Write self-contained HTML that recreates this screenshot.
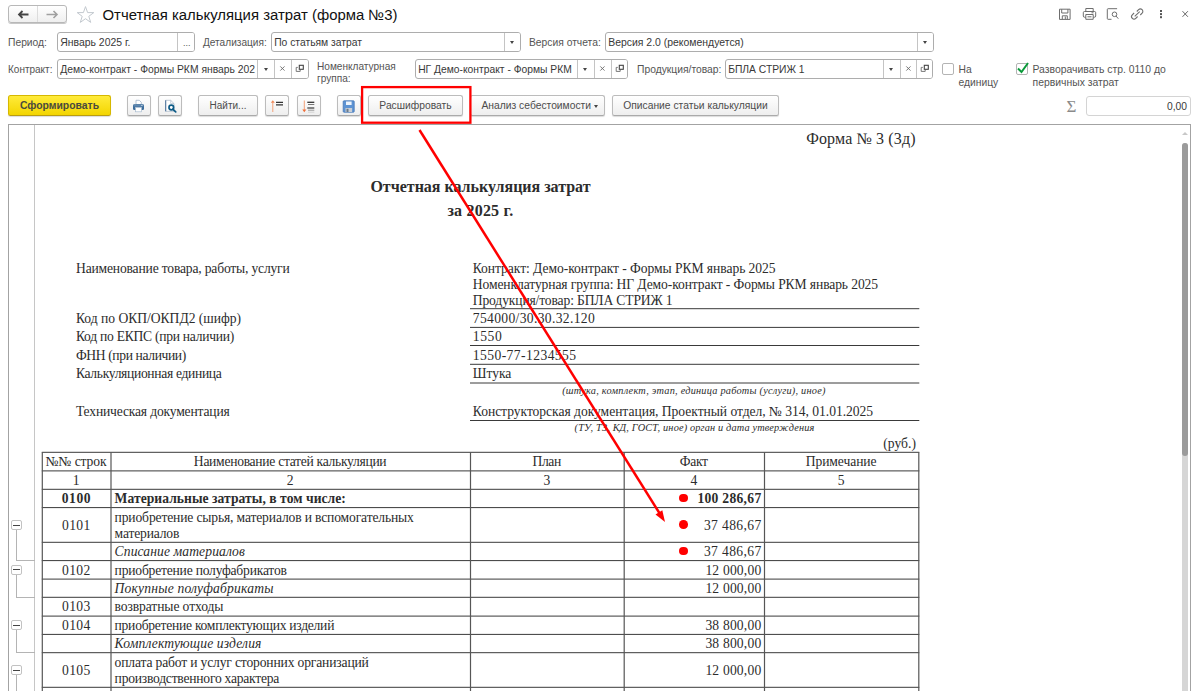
<!DOCTYPE html>
<html lang="ru"><head><meta charset="utf-8"><title>Отчетная калькуляция затрат (форма №3)</title>
<style>
html,body{margin:0;padding:0;background:#fff;}
body{width:1200px;height:691px;overflow:hidden;position:relative;font-family:"Liberation Sans",sans-serif;font-size:10.3px;color:#333;}
.abs{position:absolute;}
.lbl{position:absolute;color:#545454;font-size:10.3px;line-height:13px;white-space:nowrap;}
.inp{position:absolute;box-sizing:border-box;border:1px solid #adadad;border-radius:3px;background:#fff;height:20px;font-size:10.3px;line-height:20.2px;color:#383838;padding-left:2.2px;white-space:nowrap;overflow:hidden;}
.seg{position:absolute;top:0;bottom:0;border-left:1px solid #c4c4c4;box-sizing:border-box;background:#fff;}
.btn{position:absolute;box-sizing:border-box;border:1px solid #bcbcbc;border-bottom-color:#aaa;border-radius:2.500px;height:20.600px;background:linear-gradient(#ffffff,#eeeeee);box-shadow:0 1px 1px rgba(0,0,0,.14);font-size:10.3px;line-height:20.4px;text-align:center;color:#4c4c4c;white-space:nowrap;}
.doc{position:absolute;left:8px;top:124px;width:1183px;height:580px;box-sizing:border-box;border:1px solid #a3a3a3;background:#fff;}
.t{position:absolute;white-space:nowrap;font-family:"Liberation Serif",serif;font-size:13.6px;line-height:15px;color:#2c2c2c;}
.hl{position:absolute;height:1px;background:#3c3c3c;}
.vl{position:absolute;width:1px;background:#555;}
.gl{position:absolute;background:#b4b4b4;}
.dot{position:absolute;width:8.6px;height:8.6px;border-radius:50%;background:#f00;}
.dd{position:absolute;left:50%;top:8px;margin-left:-2.7px;width:0;height:0;border-left:2.7px solid transparent;border-right:2.7px solid transparent;border-top:3.2px solid #444;}
</style></head><body>

<!-- title row -->
<div class="abs" style="left:8px;top:5px;width:59px;height:18px;box-sizing:border-box;border:1px solid #b8b8b8;border-radius:3px;background:linear-gradient(#fff,#efefef);box-shadow:0 1px 0 #c8c8c8;"></div>
<div class="abs" style="left:37px;top:6px;width:1px;height:16px;background:#dcdcdc;"></div>
<svg class="abs" style="left:8px;top:5px" width="59" height="18" viewBox="0 0 59 18">
<path d="M20.500 9.500H11.500M14.500 6L11 9.500L14.500 13" fill="none" stroke="#444" stroke-width="1.8"/>
<path d="M38.500 9.500H48.500M45.500 6L49 9.500L45.500 13" fill="none" stroke="#a0a0a0" stroke-width="1.6"/>
</svg>
<svg class="abs" style="left:76px;top:5px" width="20" height="20" viewBox="0 0 20 20"><path d="M9.500 1.600L11.600 7.600H17.800L12.800 11.300L14.700 17.400L9.500 13.700L4.300 17.400L6.200 11.300L1.200 7.600H7.400Z" fill="#fff" stroke="#c3c9cf" stroke-width="1"/></svg>
<div class="abs" style="left:102.500px;top:4px;font-size:14.900px;line-height:22px;color:#111;white-space:nowrap;">Отчетная калькуляция затрат (форма №3)</div>

<!-- top-right icons -->
<svg class="abs" style="left:1050px;top:0" width="150" height="30" viewBox="0 0 150 30" fill="none" stroke="#6e6e6e" stroke-width="1">
<path d="M9.500 9.200h10.600v10.200h-10.600zM11.700 9.200v3.800h6.200v-3.800M12.300 19.400v-3.600h5v3.600M15.300 16.500v2.500"/>
<path d="M35.800 11.500v-3h7.400v3M35.800 17.200h-1.300a1.200 1.200 0 0 1 -1.200 -1.200v-3.300a1.200 1.200 0 0 1 1.200 -1.200h10a1.200 1.200 0 0 1 1.200 1.200v3.300a1.200 1.200 0 0 1 -1.200 1.200h-1.300M35.800 14.500h7.400v4.800h-7.400zM37.500 16.800h4M41.500 12.800h2"/>
<path d="M61.500 19.300h-3.400a.8 .8 0 0 1 -.8 -.8v-9a.8 .8 0 0 1 .8 -.8h9M66 16l2.300 2.700"/><circle cx="64.500" cy="14.300" r="2.300"/>
<path d="M84.700 16.300l5 -4.600M86.800 11.500l1.800 -1.800a2.450 2.450 0 0 1 3.500 3.500l-1.800 1.800M87.600 16.500l-1.800 1.800a2.450 2.450 0 0 1 -3.500 -3.500l1.800 -1.800" stroke-width="1.100"/>
<path d="M132.500 11.200l5.400 5.600M137.900 11.200l-5.400 5.600" stroke="#666"/>
</svg>
<div class="abs" style="left:1160.300px;top:9.800px;width:1.900px;height:1.900px;background:#555;box-shadow:0 3.100px 0 #555,0 6.200px 0 #555;"></div>

<!-- row 2 -->
<div class="lbl" style="left:8px;top:35.800px;">Период:</div>
<div class="inp" style="left:57px;top:32px;width:138px;font-size:10.45px">Январь 2025 г.<div class="seg" style="left:119.300px;width:17.700px;text-align:center;color:#555;font-size:9px;">...</div></div>
<div class="lbl" style="left:203px;top:35.800px;font-size:10.100px">Детализация:</div>
<div class="inp" style="left:271px;top:32px;width:250px;">По статьям затрат<div class="seg" style="left:232px;width:17px;"><div class="dd"></div></div></div>
<div class="lbl" style="left:529px;top:35.800px;">Версия отчета:</div>
<div class="inp" style="left:605px;top:32px;width:329px;font-size:10.45px">Версия 2.0 (рекомендуется)<div class="seg" style="left:310.600px;width:17px;"><div class="dd"></div></div></div>

<!-- row 3 -->
<div class="lbl" style="left:8px;top:62.900px;font-size:10px">Контракт:</div>
<div class="inp" style="left:57px;top:59px;width:252px;font-size:10.350px">Демо-контракт - Формы РКМ январь 202<div class="seg" style="left:199.300px;width:17.300px;"><div class="dd"></div></div><div class="seg" style="left:215.900px;width:17px;"><svg class="abs" style="left:0;top:0" width="17" height="18" viewBox="0 0 17 18"><path d="M5.300 6.400l4.200 4.200M9.500 6.400l-4.200 4.200" fill="none" stroke="#6a6a6a" stroke-width="0.9"/></svg></div><div class="seg" style="left:232.800px;width:17.500px;"><svg class="abs" style="left:0;top:0" width="17" height="18" viewBox="0 0 17 18"><path d="M5.800 7.400h-1.600v4h4v-1.500" fill="none" stroke="#777" stroke-width="1"/><rect x="7.300" y="5.300" width="4" height="4" fill="#fff" stroke="#444" stroke-width="1.100"/></svg></div></div>
<div class="lbl" style="left:317px;top:61.400px;line-height:11.800px;font-size:10.100px">Номенклатурная<br>группа:</div>
<div class="inp" style="left:415px;top:59px;width:213px;">НГ Демо-контракт - Формы РКМ<div class="seg" style="left:160.800px;width:17.200px;"><div class="dd"></div></div><div class="seg" style="left:178px;width:17px;"><svg class="abs" style="left:0;top:0" width="17" height="18" viewBox="0 0 17 18"><path d="M5.300 6.400l4.200 4.200M9.500 6.400l-4.200 4.200" fill="none" stroke="#6a6a6a" stroke-width="0.9"/></svg></div><div class="seg" style="left:195.200px;width:17px;"><svg class="abs" style="left:0;top:0" width="17" height="18" viewBox="0 0 17 18"><path d="M5.800 7.400h-1.600v4h4v-1.500" fill="none" stroke="#777" stroke-width="1"/><rect x="7.300" y="5.300" width="4" height="4" fill="#fff" stroke="#444" stroke-width="1.100"/></svg></div></div>
<div class="lbl" style="left:637px;top:62.800px;">Продукция/товар:</div>
<div class="inp" style="left:725px;top:59px;width:208px;">БПЛА СТРИЖ 1<div class="seg" style="left:156.500px;width:17px;"><div class="dd"></div></div><div class="seg" style="left:173.500px;width:17px;"><svg class="abs" style="left:0;top:0" width="17" height="18" viewBox="0 0 17 18"><path d="M5.300 6.400l4.200 4.200M9.500 6.400l-4.200 4.200" fill="none" stroke="#6a6a6a" stroke-width="0.9"/></svg></div><div class="seg" style="left:190.200px;width:17px;"><svg class="abs" style="left:0;top:0" width="17" height="18" viewBox="0 0 17 18"><path d="M5.800 7.400h-1.600v4h4v-1.500" fill="none" stroke="#777" stroke-width="1"/><rect x="7.300" y="5.300" width="4" height="4" fill="#fff" stroke="#444" stroke-width="1.100"/></svg></div></div>
<div class="abs" style="left:942px;top:63px;width:12px;height:12px;box-sizing:border-box;border:1px solid #b4b4b4;border-radius:2px;background:#fff;"></div>
<div class="lbl" style="left:958.500px;top:64.400px;line-height:12.500px;">На<br>единицу</div>
<div class="abs" style="left:1015.6px;top:63px;width:12px;height:12px;box-sizing:border-box;border:1px solid #b4b4b4;border-radius:2px;background:#fff;"></div>
<svg class="abs" style="left:1015px;top:60px" width="16" height="16" viewBox="0 0 16 16"><path d="M3 8.500L6.500 12L13 3" fill="none" stroke="#0a9a3a" stroke-width="2"/></svg>
<div class="lbl" style="left:1032.500px;top:62.500px;line-height:13px;font-size:10.400px">Разворачивать стр. 0110 до<br>первичных затрат</div>

<!-- button row -->
<div class="btn" style="left:8px;top:95px;width:103px;background:linear-gradient(#ffeb3a,#f3d500);border-color:#d6b800;border-bottom-color:#b99d10;color:#4a4a3e;font-weight:bold;font-size:10.400px;">Сформировать</div>
<div class="btn" style="left:127px;top:95px;width:24px;"><svg class="abs" style="left:0;top:0" width="22" height="19" viewBox="0 0 22 19">
<path d="M8 8.500V4.300h3.300l2 2v2.200z" fill="#fff" stroke="#9fb3c8" stroke-width="0.800"/>
<rect x="5" y="8.300" width="11" height="5.600" rx="1.200" fill="#3d6d9c"/>
<rect x="5.600" y="9.300" width="9.800" height="1" fill="#6d93b8"/>
<rect x="7.600" y="11.300" width="5.900" height="4.500" fill="#fff" stroke="#a9bccf" stroke-width="0.700"/>
<rect x="13.400" y="9" width="1" height="1" fill="#dfe8f0"/>
</svg></div>
<div class="btn" style="left:158px;top:95px;width:24px;"><svg class="abs" style="left:0;top:0" width="22" height="19" viewBox="0 0 22 19">
<path d="M6.700 4.300h5l3.300 3.300v7.700h-8.300z" fill="#fff" stroke="#aebccb" stroke-width="0.800"/>
<path d="M6.700 4.300v11" stroke="#4a7099" stroke-width="1" fill="none"/>
<path d="M11.700 4.300v3.300h3.300" fill="none" stroke="#aebccb" stroke-width="0.700"/>
<circle cx="12.300" cy="11.500" r="2.300" fill="#fff" stroke="#0c5a86" stroke-width="1.700"/>
<path d="M14 13.300l2.700 2.500" stroke="#0c5a86" stroke-width="1.800" stroke-linecap="round"/>
</svg></div>
<div class="btn" style="left:198px;top:95px;width:60px;font-size:10px">Найти...</div>
<div class="btn" style="left:265px;top:95px;width:24px;"><svg class="abs" style="left:0;top:0" width="22" height="19" viewBox="0 0 22 19">
<path d="M6.800 5v11" stroke="#f3a27a" stroke-width="1"/><path d="M4.800 6.800l2-2.600l2 2.600z" fill="#f08a5a"/>
<path d="M10 6.300h7M10 8.800h7" stroke="#333" stroke-width="1.300"/>
</svg></div>
<div class="btn" style="left:297px;top:95px;width:24px;"><svg class="abs" style="left:0;top:0" width="22" height="19" viewBox="0 0 22 19">
<path d="M6.300 4.500v10.500" stroke="#f3a27a" stroke-width="1"/><path d="M4.300 13.600l2 2.600l2-2.600z" fill="#f0703a"/>
<path d="M9.300 6.300h7" stroke="#333" stroke-width="1.300"/><path d="M10 8.500h6.300" stroke="#777" stroke-width="1"/><path d="M9.300 12h7" stroke="#444" stroke-width="1.300"/><path d="M10 14.200h6.300" stroke="#999" stroke-width="1"/><path d="M10 16.200h6.300" stroke="#ccc" stroke-width="0.800"/>
</svg></div>
<div class="btn" style="left:337px;top:95px;width:24px;"><svg class="abs" style="left:0;top:0" width="22" height="19" viewBox="0 0 22 19">
<rect x="5.200" y="4.800" width="11" height="11.400" rx="0.800" fill="#5d93d3" stroke="#4677b5" stroke-width="0.800"/>
<rect x="8" y="5.500" width="5.600" height="3.500" fill="#eef4fb"/>
<rect x="7.500" y="12" width="6.600" height="4" fill="#c9cfd6"/><rect x="8.500" y="12.800" width="2" height="3.200" fill="#6a7a8a"/>
</svg></div>
<div class="btn" style="left:368px;top:95px;width:95px;">Расшифровать</div>
<div class="btn" style="left:470px;top:95px;width:135px;text-align:left;padding-left:10.500px;">Анализ себестоимости<div class="dd" style="left:auto;right:6px;top:9px;margin:0"></div></div>
<div class="btn" style="left:612px;top:95px;width:167px;">Описание статьи калькуляции</div>
<div class="abs" style="left:1066.500px;top:97px;font-family:'Liberation Serif',serif;font-size:17px;line-height:20px;color:#8a8a8a;">Σ</div>
<div class="inp" style="left:1086px;top:96px;width:105px;text-align:right;padding-right:3px;border-color:#d4d4d4;">0,00</div>

<!-- document -->
<div class="doc"></div>
<div class="abs" style="left:34px;top:125px;width:1px;height:570px;background:#c6c6c6;"></div>
<div class="t" style="top:129.50px;line-height:17px;font-size:16px;left:315.63px;width:600px;text-align:right;letter-spacing:0.132px;">Форма № 3 (3д)</div>
<div class="t" style="top:178.00px;line-height:17px;font-size:16px;left:180.49px;width:600px;text-align:center;font-weight:bold;letter-spacing:-0.014px;">Отчетная калькуляция затрат</div>
<div class="t" style="top:201.70px;line-height:17px;font-size:16px;left:180.41px;width:600px;text-align:center;font-weight:bold;letter-spacing:0.212px;">за 2025 г.</div>
<div class="t" style="top:261.20px;left:76px;letter-spacing:-0.184px;">Наименование товара, работы, услуги</div>
<div class="t" style="top:260.90px;left:472.8px;letter-spacing:-0.063px;">Контракт: Демо-контракт - Формы РКМ январь 2025</div>
<div class="t" style="top:276.90px;left:472.8px;letter-spacing:-0.112px;">Номенклатурная группа: НГ Демо-контракт - Формы РКМ январь 2025</div>
<div class="t" style="top:293.00px;left:472.8px;letter-spacing:-0.147px;">Продукция/товар: БПЛА СТРИЖ 1</div>
<div class="t" style="top:311.00px;left:76px;letter-spacing:-0.025px;">Код по ОКП/ОКПД2 (шифр)</div>
<div class="t" style="top:311.00px;left:472.8px;letter-spacing:0.337px;">754000/30.30.32.120</div>
<div class="t" style="top:329.30px;left:76px;letter-spacing:-0.275px;">Код по ЕКПС (при наличии)</div>
<div class="t" style="top:329.30px;left:472.8px;letter-spacing:0.6px;">1550</div>
<div class="t" style="top:347.60px;left:76px;letter-spacing:-0.385px;">ФНН (при наличии)</div>
<div class="t" style="top:347.60px;left:472.8px;letter-spacing:0.42px;">1550-77-1234555</div>
<div class="t" style="top:366.00px;left:76px;letter-spacing:-0.334px;">Калькуляционная единица</div>
<div class="t" style="top:366.00px;left:472.8px;letter-spacing:-0.042px;">Штука</div>
<div class="t" style="top:385.20px;line-height:11px;font-size:10.3px;left:393.92px;width:600px;text-align:center;font-style:italic;letter-spacing:0.232px;">(штука, комплект, этап, единица работы (услуги), иное)</div>
<div class="t" style="top:404.20px;left:76px;letter-spacing:-0.179px;">Техническая документация</div>
<div class="t" style="top:404.20px;left:472.8px;letter-spacing:-0.043px;">Конструкторская документация, Проектный отдел, № 314, 01.01.2025</div>
<div class="t" style="top:422.20px;line-height:11px;font-size:10.3px;left:394.58px;width:600px;text-align:center;font-style:italic;letter-spacing:0.151px;">(ТУ, ТЗ, КД, ГОСТ, иное) орган и дата утверждения</div>
<div class="t" style="top:436.00px;left:316.04px;width:600px;text-align:right;letter-spacing:0.038px;">(руб.)</div>
<svg class="abs" style="left:0;top:0" width="1200" height="691" viewBox="0 0 1200 691" fill="none"><g stroke="#3a3a3a" stroke-width="1"><path d="M470 308.7H919.300"/><path d="M470 327.4H919.300"/><path d="M470 345.5H919.300"/><path d="M470 364.3H919.300"/><path d="M470 383H919.300"/><path d="M470 420.5H919.300"/><path d="M41.8 452.3H919.3"/><path d="M41.8 470.9H919.3"/><path d="M41.8 489.3H919.3"/><path d="M41.8 507.6H919.3"/><path d="M41.8 542.3H919.3"/><path d="M41.8 560.6H919.3"/><path d="M41.8 579.1H919.3"/><path d="M41.8 597.3H919.3"/><path d="M41.8 616.1H919.3"/><path d="M41.8 634.4H919.3"/><path d="M41.8 652.7H919.3"/><path d="M41.8 687.3H919.3"/><path d="M41.8 706H919.3"/></g><g stroke="#565656" stroke-width="1.200"><path d="M42.3 452.3V706"/><path d="M111 452.3V706"/><path d="M470.5 452.3V706"/><path d="M624.2 452.3V706"/><path d="M764.5 452.3V706"/><path d="M918.8 452.3V706"/></g></svg>
<div class="t" style="top:454.35px;left:-223.91px;width:600px;text-align:center;letter-spacing:-0.127px;">№№ строк</div>
<div class="t" style="top:454.35px;left:-9.90px;width:600px;text-align:center;letter-spacing:-0.293px;">Наименование статей калькуляции</div>
<div class="t" style="top:454.35px;left:246.66px;width:600px;text-align:center;letter-spacing:-0.374px;">План</div>
<div class="t" style="top:454.35px;left:393.73px;width:600px;text-align:center;letter-spacing:-0.247px;">Факт</div>
<div class="t" style="top:454.35px;left:541.10px;width:600px;text-align:center;letter-spacing:-0.093px;">Примечание</div>
<div class="t" style="top:472.85px;left:-223.85px;width:600px;text-align:center;">1</div>
<div class="t" style="top:472.85px;left:-9.75px;width:600px;text-align:center;">2</div>
<div class="t" style="top:472.85px;left:246.85px;width:600px;text-align:center;">3</div>
<div class="t" style="top:472.85px;left:393.85px;width:600px;text-align:center;">4</div>
<div class="t" style="top:472.85px;left:541.15px;width:600px;text-align:center;">5</div>
<div class="t" style="top:491.20px;left:-223.58px;width:600px;text-align:center;font-weight:bold;letter-spacing:0.538px;">0100</div>
<div class="t" style="top:491.20px;left:114.6px;font-weight:bold;letter-spacing:0.039px;">Материальные затраты, в том числе:</div>
<div class="t" style="top:491.20px;left:161.49px;width:600px;text-align:right;font-weight:bold;letter-spacing:0.292px;">100 286,67</div>
<div class="dot" style="left:679.4px;top:493.9px;"></div>
<div class="t" style="top:517.70px;left:-223.66px;width:600px;text-align:center;letter-spacing:0.371px;">0101</div>
<div class="t" style="top:509.50px;left:114.6px;letter-spacing:-0.154px;">приобретение сырья, материалов и вспомогательных</div>
<div class="t" style="top:525.90px;left:114.6px;letter-spacing:-0.177px;">материалов</div>
<div class="t" style="top:517.70px;left:161.57px;width:600px;text-align:right;letter-spacing:0.366px;">37 486,67</div>
<div class="dot" style="left:679.4px;top:520.4px;"></div>
<div class="t" style="top:544.20px;left:114.6px;font-style:italic;letter-spacing:0.093px;">Списание материалов</div>
<div class="t" style="top:544.20px;left:161.57px;width:600px;text-align:right;letter-spacing:0.366px;">37 486,67</div>
<div class="dot" style="left:679.4px;top:546.9px;"></div>
<div class="t" style="top:562.60px;left:-223.66px;width:600px;text-align:center;letter-spacing:0.371px;">0102</div>
<div class="t" style="top:562.60px;left:114.6px;letter-spacing:-0.214px;">приобретение полуфабрикатов</div>
<div class="t" style="top:562.60px;left:161.38px;width:600px;text-align:right;letter-spacing:0.178px;">12 000,00</div>
<div class="t" style="top:580.95px;left:114.6px;font-style:italic;letter-spacing:0.183px;">Покупные полуфабрикаты</div>
<div class="t" style="top:580.95px;left:161.38px;width:600px;text-align:right;letter-spacing:0.178px;">12 000,00</div>
<div class="t" style="top:599.45px;left:-223.66px;width:600px;text-align:center;letter-spacing:0.371px;">0103</div>
<div class="t" style="top:599.45px;left:114.6px;letter-spacing:-0.104px;">возвратные отходы</div>
<div class="t" style="top:618.00px;left:-223.66px;width:600px;text-align:center;letter-spacing:0.371px;">0104</div>
<div class="t" style="top:618.00px;left:114.6px;letter-spacing:-0.271px;">приобретение комплектующих изделий</div>
<div class="t" style="top:618.00px;left:161.38px;width:600px;text-align:right;letter-spacing:0.178px;">38 800,00</div>
<div class="t" style="top:636.30px;left:114.6px;font-style:italic;letter-spacing:0.138px;">Комплектующие изделия</div>
<div class="t" style="top:636.30px;left:161.38px;width:600px;text-align:right;letter-spacing:0.178px;">38 800,00</div>
<div class="t" style="top:662.75px;left:-223.66px;width:600px;text-align:center;letter-spacing:0.371px;">0105</div>
<div class="t" style="top:654.55px;left:114.6px;letter-spacing:-0.164px;">оплата работ и услуг сторонних организаций</div>
<div class="t" style="top:670.95px;left:114.6px;letter-spacing:-0.238px;">производственного характера</div>
<div class="t" style="top:662.75px;left:161.38px;width:600px;text-align:right;letter-spacing:0.178px;">12 000,00</div>
<div class="gl" style="left:16px;top:530.0px;width:1px;height:30.1px;"></div><div class="gl" style="left:16px;top:560.1px;width:19px;height:1px;"></div>
<div class="abs" style="left:11px;top:520.0px;width:10.500px;height:10px;box-sizing:border-box;border:1px solid #c2c2c2;border-radius:2px;background:#fff;"></div><div class="abs" style="left:13px;top:524.5px;width:6.500px;height:1px;background:#444;"></div>
<div class="gl" style="left:16px;top:574.9px;width:1px;height:21.9px;"></div><div class="gl" style="left:16px;top:596.8px;width:19px;height:1px;"></div>
<div class="abs" style="left:11px;top:564.9px;width:10.500px;height:10px;box-sizing:border-box;border:1px solid #c2c2c2;border-radius:2px;background:#fff;"></div><div class="abs" style="left:13px;top:569.4px;width:6.500px;height:1px;background:#444;"></div>
<div class="gl" style="left:16px;top:630.2px;width:1px;height:22.0px;"></div><div class="gl" style="left:16px;top:652.2px;width:19px;height:1px;"></div>
<div class="abs" style="left:11px;top:620.2px;width:10.500px;height:10px;box-sizing:border-box;border:1px solid #c2c2c2;border-radius:2px;background:#fff;"></div><div class="abs" style="left:13px;top:624.8px;width:6.500px;height:1px;background:#444;"></div>
<div class="gl" style="left:16px;top:675.0px;width:1px;height:45.0px;"></div><div class="gl" style="left:16px;top:720.0px;width:19px;height:1px;"></div>
<div class="abs" style="left:11px;top:665.0px;width:10.500px;height:10px;box-sizing:border-box;border:1px solid #c2c2c2;border-radius:2px;background:#fff;"></div><div class="abs" style="left:13px;top:669.5px;width:6.500px;height:1px;background:#444;"></div>

<!-- scrollbar -->
<div class="abs" style="left:1181.6px;top:143px;width:6.4px;height:560px;background:#d6d6d6;border-radius:3px;"></div>
<div class="abs" style="left:1181.6px;top:143px;width:6.4px;height:313px;background:#9b9b9b;border-radius:3px;"></div>
<div class="abs" style="left:1182px;top:132px;width:0;height:0;border-left:3px solid transparent;border-right:3px solid transparent;border-bottom:3.500px solid #c8c8c8;"></div>
<!-- annotation -->
<svg class="abs" style="left:0;top:0;pointer-events:none" width="1200" height="691" viewBox="0 0 1200 691">
<rect x="362.100" y="87.100" width="108.300" height="35.600" fill="none" stroke="#ff0000" stroke-width="2.300"/>
<line x1="419.500" y1="130" x2="660" y2="514" stroke="#ff0000" stroke-width="2.500"/>
<path d="M665 522L655.500 514.500L662.300 510.300Z" fill="#ff0000"/>
</svg>
</body></html>
